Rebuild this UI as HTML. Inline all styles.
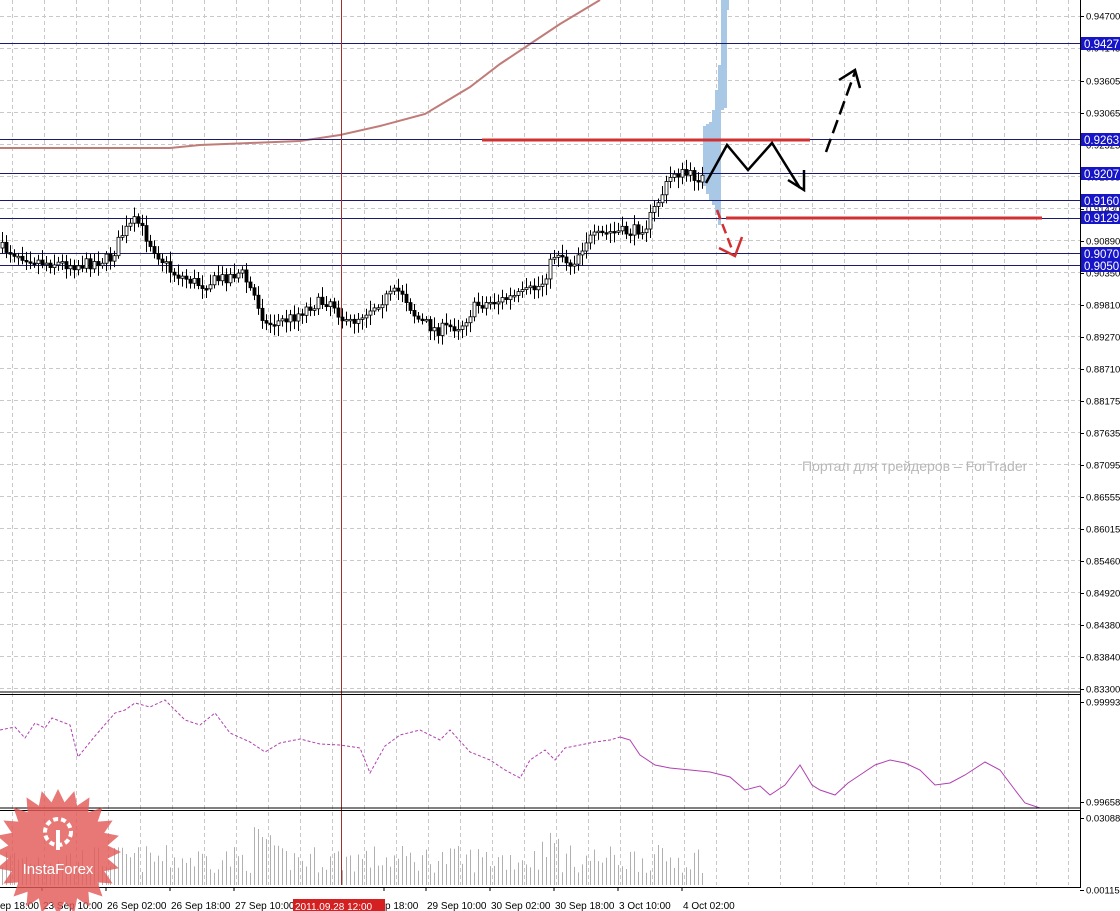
<!DOCTYPE html>
<html><head><meta charset="utf-8"><style>
html,body{margin:0;padding:0;background:#fff;overflow:hidden}
svg{display:block;font-family:"Liberation Sans",sans-serif}
</style></head><body>
<svg id="s" width="1120" height="911" xmlns="http://www.w3.org/2000/svg">
<rect width="1120" height="911" fill="#fff"/>
<g id="grid" stroke="#c8c8c8" stroke-dasharray="4,3" stroke-width="1"></g>
<g id="vol" stroke="#b0b0b0" stroke-width="1"></g>
<polyline fill="none" stroke="#c07c78" stroke-width="2" points="0,148 150,148 170,148 200,145 250,143 300,141 340,135 380,126 425,114 440,105 470,87 500,64 530,44 560,24 600,0"/>
<g fill="#a9c8e6">
<rect x="703" y="126" width="3" height="60"/><rect x="706" y="124" width="3" height="70"/><rect x="709" y="122" width="3" height="78"/><rect x="712" y="110" width="3" height="95"/><rect x="715" y="90" width="3" height="125"/><rect x="718" y="65" width="3" height="160"/><rect x="721" y="0" width="3" height="110"/><rect x="724" y="0" width="3" height="108"/><rect x="727" y="0" width="2" height="10"/>
</g>
<g stroke="#1a1a6e" stroke-width="1">
<line x1="0" y1="43.5" x2="1080" y2="43.5"/><line x1="0" y1="139.5" x2="1080" y2="139.5"/><line x1="0" y1="173.5" x2="1080" y2="173.5"/><line x1="0" y1="200.5" x2="1080" y2="200.5"/><line x1="0" y1="218.5" x2="1080" y2="218.5"/><line x1="0" y1="253.5" x2="1080" y2="253.5"/><line x1="0" y1="265.5" x2="1080" y2="265.5"/>
</g>
<line x1="341.5" y1="0" x2="341.5" y2="885" stroke="#a03030" stroke-width="1"/>
<g id="candles"></g>
<line x1="482" y1="140" x2="810" y2="140" stroke="#d03030" stroke-width="3"/>
<line x1="726" y1="218" x2="1042" y2="218" stroke="#d03030" stroke-width="3"/>
<g fill="none" stroke="#000" stroke-width="2.5">
<polyline points="706,183 727,145 748,170 772,143 800,188"/>
<polyline points="788,180 804,190 804,170"/>
<line x1="826" y1="152" x2="855" y2="72" stroke-dasharray="14,6"/>
<polyline points="839,80 855,70 860,88"/>
</g>
<g fill="none" stroke="#d03030" stroke-width="2.5">
<line x1="717" y1="210" x2="733" y2="252" stroke-dasharray="10,5"/>
<polyline points="719,248 735,256 742,237"/>
</g>
<polyline id="osc1" fill="none" stroke="#b040b0" stroke-width="1" stroke-dasharray="3,2"/>
<polyline id="osc2" fill="none" stroke="#b040b0" stroke-width="1"/>
<rect x="1080" y="0" width="40" height="911" fill="#fff"/>
<line x1="1080.5" y1="0" x2="1080.5" y2="887" stroke="#000"/>
<line x1="0" y1="692" x2="1080" y2="692" stroke="#000"/><line x1="0" y1="694.5" x2="1080" y2="694.5" stroke="#000"/>
<line x1="0" y1="808" x2="1080" y2="808" stroke="#000"/><line x1="0" y1="810.5" x2="1080" y2="810.5" stroke="#000"/>
<line x1="0" y1="887.5" x2="1081" y2="887.5" stroke="#000"/>
<text x="802" y="471" font-size="14" fill="#b8b8b8">Портал для трейдеров – ForTrader</text>
<rect x="1081" y="0" width="39" height="911" fill="#fff"/>
<g id="ax" font-size="9.5" fill="#000"></g>
<g id="tl" font-size="10" fill="#000"></g>
<rect x="293" y="899" width="92" height="12" fill="#d42020"/>
<text x="295" y="910" font-size="10" fill="#fff">2011.09.28 12:00</text>
<g transform="translate(58,852)">
<polygon id="star" fill="#e25a58" opacity="0.82"/>
<circle cx="0" cy="-20" r="13" fill="none" stroke="#fff" stroke-width="4" stroke-dasharray="5,3"/>
<rect x="-2" y="-22" width="4" height="20" fill="#fff"/>
<text x="0" y="22" font-size="15" fill="#fff" text-anchor="middle">InstaForex</text>
</g>
</svg>
<script>
var NS="http://www.w3.org/2000/svg";
function el(t,a,p){var e=document.createElementNS(NS,t);for(var k in a)e.setAttribute(k,a[k]);(p||document.getElementById('s')).appendChild(e);return e;}
var g=document.getElementById('grid');
for(var x=12;x<1080;x+=32)el('line',{x1:x+.5,y1:0,x2:x+.5,y2:885},g);
for(var y=16;y<692;y+=32)el('line',{x1:0,y1:y+.5,x2:1080,y2:y+.5},g);
el('line',{x1:0,y1:48.5,x2:1080,y2:48.5},g);
var seed=7;function rnd(){seed=(seed*16807)%2147483647;return seed/2147483647;}
var kp=[[0,248],[40,262],[80,265],[110,258],[120,235],[135,220],[150,245],[170,272],[200,285],[240,272],[255,300],[265,325],[290,318],[310,305],[330,300],[345,325],[360,315],[380,300],[400,290],[415,318],[435,330],[460,325],[475,305],[500,300],[520,295],[540,285],[555,250],[570,265],[585,240],[610,232],[630,232],[645,225],[655,205],[672,172],[700,178]];
function yAt(x){for(var i=1;i<kp.length;i++)if(x<=kp[i][0]){var a=kp[i-1],b=kp[i];return a[1]+(b[1]-a[1])*(x-a[0])/(b[0]-a[0]);}return 178;}
var cg=document.getElementById('candles'),vg=document.getElementById('vol');
var prev=yAt(0);
for(var x=1;x<702;x+=4){var c=yAt(x)+(rnd()-.5)*12;var o=prev;var hi=Math.min(o,c)-3-rnd()*8,lo=Math.max(o,c)+3+rnd()*8;
el('line',{x1:x+1.5,y1:hi,x2:x+1.5,y2:lo,stroke:'#000'},cg);
var t=Math.min(o,c),h=Math.max(1.5,Math.abs(o-c));
el('rect',{x:x,y:t,width:3,height:h,fill:c<o?'#fff':'#000',stroke:'#000','stroke-width':.8},cg);
prev=c;
var vh=12+rnd()*28;if(x>250&&x<270)vh+=20;if(x>540&&x<560)vh+=15;
el('line',{x1:x+1.5,y1:885-vh,x2:x+1.5,y2:885},vg);}
var op=[[0,730],[15,727],[25,738],[35,723],[45,728],[52,718],[70,725],[78,757],[95,736],[115,713],[125,710],[135,703],[150,707],[165,700],[175,710],[185,720],[200,725],[215,713],[230,733],[250,742],[265,752],[280,743],[300,739],[320,744],[340,745],[360,748],[370,773],[385,746],[400,735],[420,730],[440,740],[450,730],[470,752],[490,760],[505,770],[520,778],[530,760],[545,750],[555,760],[565,748],[580,745],[595,742],[610,740],[620,737]];
var op2=[[620,737],[630,740],[640,755],[655,765],[670,768],[690,770],[710,772],[730,777],[745,790],[760,786],[770,795],[785,785],[800,765],[812,785],[820,790],[835,795],[848,783],[860,775],[875,765],[890,760],[905,763],[920,770],[935,785],[950,783],[965,775],[985,762],[1000,770],[1015,790],[1025,803],[1040,808]];
document.getElementById('osc1').setAttribute('points',op.map(function(p){return p.join(',')}).join(' '));
document.getElementById('osc2').setAttribute('points',op2.map(function(p){return p.join(',')}).join(' '));
var ax=document.getElementById('ax');
var labs=[[16,'0.94700'],[48,'0.94145'],[81,'0.93605'],[113,'0.93065'],[145,'0.92525'],[177,'0.91985'],[209,'0.91430'],[241,'0.90890'],[273,'0.90350'],[305,'0.89810'],[337,'0.89270'],[369,'0.88710'],[401,'0.88175'],[433,'0.87635'],[465,'0.87095'],[497,'0.86555'],[529,'0.86015'],[561,'0.85460'],[593,'0.84920'],[625,'0.84380'],[657,'0.83840'],[689,'0.83300'],[702,'0.99993'],[802,'0.99658'],[818,'0.03088'],[890,'0.00115']];
labs.forEach(function(l){el('line',{x1:1080,y1:l[0]+.5,x2:1084,y2:l[0]+.5,stroke:'#000'},ax);var t=el('text',{x:1086,y:l[0]+3.5},ax);t.textContent=l[1];});
[[43,'0.9427'],[139,'0.9263'],[173,'0.9207'],[200,'0.9160'],[217,'0.9129'],[253,'0.9070'],[265,'0.9050']].forEach(function(l){el('rect',{x:1081,y:l[0]-6,width:39,height:13,fill:'#1616c8'},ax);var t=el('text',{x:1084,y:l[0]+5,fill:'#fff','font-size':'11.5'},ax);t.textContent=l[1];});
var tl=document.getElementById('tl');
[[0,'ep 18:00'],[43,'23 Sep 10:00'],[107,'26 Sep 02:00'],[171,'26 Sep 18:00'],[235,'27 Sep 10:00'],[385,'p 18:00'],[427,'29 Sep 10:00'],[491,'30 Sep 02:00'],[555,'30 Sep 18:00'],[619,'3 Oct 10:00'],[683,'4 Oct 02:00']].forEach(function(l){el('line',{x1:l[0]-1,y1:887,x2:l[0]-1,y2:891,stroke:'#000'},tl);var t=el('text',{x:l[0],y:909},tl);t.textContent=l[1];});
var pts=[];for(var i=0;i<48;i++){var r=i%2?50:63;var a=i*Math.PI/24;pts.push((r*Math.cos(a)).toFixed(1)+','+(r*Math.sin(a)).toFixed(1));}
document.getElementById('star').setAttribute('points',pts.join(' '));
</script>
</body></html>
